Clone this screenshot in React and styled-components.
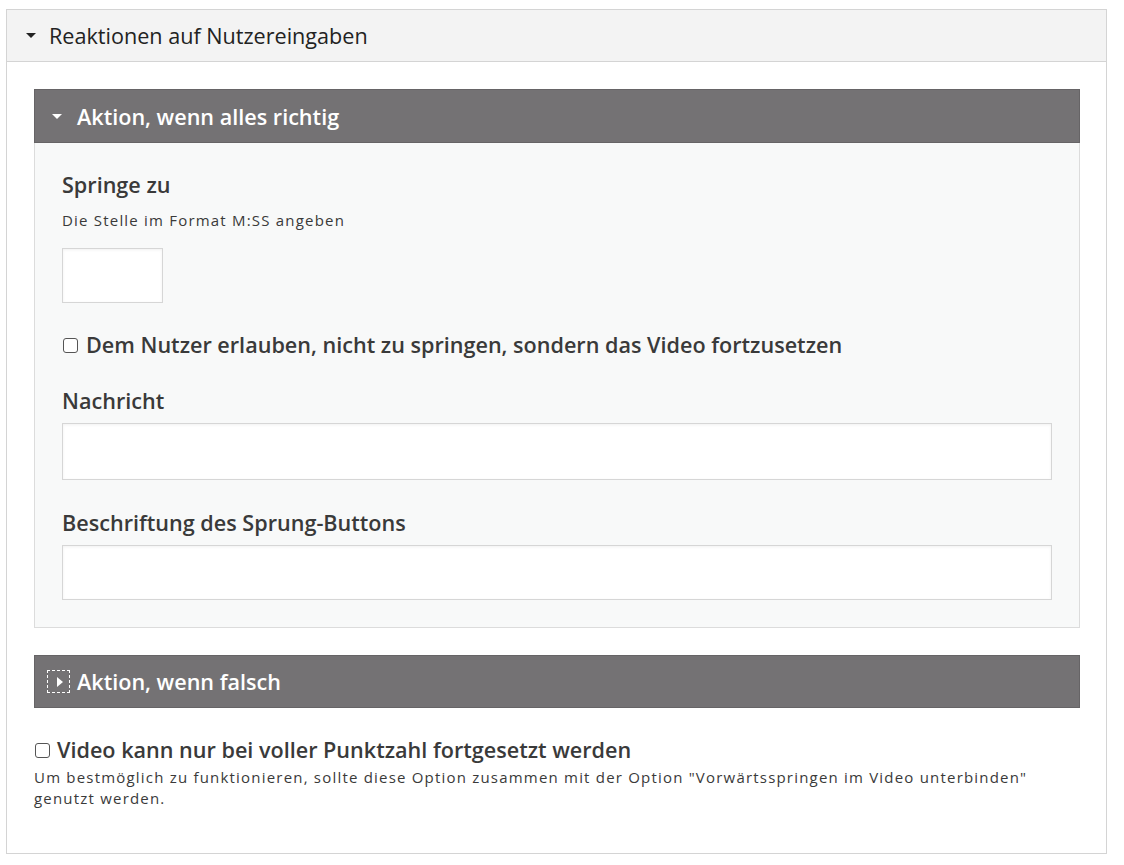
import styled, { createGlobalStyle } from "styled-components";

const GlobalStyle = createGlobalStyle`
  body {
    margin: 0;
    background: #fff;
    font-family: "Open Sans", "Liberation Sans", sans-serif;
    color: #3a3a3a;
  }
`;

const Page = styled.div`
  padding: 9px 17px 11px 6px;
`;

const Group = styled.div`
  border: 1px solid #d4d4d4;
  background: #fff;
`;

const GroupTitle = styled.div`
  display: flex;
  align-items: center;
  height: 51px;
  padding-left: 19px;
  background: #f3f3f3;
  border-bottom: 1px solid #d4d4d4;
  font-size: 21.6px;
  color: #222;
`;

const GroupContent = styled.div`
  padding: 27px 26px 44px 27px;
`;

const Caret = styled.span`
  display: inline-block;
  width: 0;
  height: 0;
  border-left: 5px solid transparent;
  border-right: 5px solid transparent;
  border-top: 5px solid ${({ color }) => color || "#222"};
  margin-right: ${({ gap }) => gap || 13}px;
`;

const SubHeader = styled.div`
  display: flex;
  align-items: center;
  height: ${({ collapsed }) => (collapsed ? "51px" : "52px")};
  padding-left: ${({ collapsed }) => (collapsed ? "12px" : "17px")};
  background: #747274;
  border: 1px solid #666466;
  color: #fff;
  font-size: 21.6px;
  font-weight: 600;
`;

const FocusBox = styled.span`
  display: inline-flex;
  align-items: center;
  justify-content: center;
  width: 23px;
  height: 23px;
  border: 1px dashed #fff;
  margin-right: 7px;
  box-sizing: border-box;
`;

const RightCaret = styled.span`
  width: 0;
  height: 0;
  border-top: 5px solid transparent;
  border-bottom: 5px solid transparent;
  border-left: 6px solid #fff;
  margin-left: 2px;
`;

const SubBody = styled.div`
  background: #f8f9f9;
  border: 1px solid #dcdcdc;
  border-top: none;
  padding: 27px;
  margin-bottom: 27px;
`;

const Label = styled.div`
  font-size: 21.6px;
  font-weight: 600;
  line-height: 30px;
  color: #3a3a3a;
  margin-top: ${({ mt }) => mt || 0}px;
`;

const Description = styled.div`
  font-size: 15px;
  line-height: 21px;
  letter-spacing: 1.2px;
  color: #3a3a3a;
  margin-top: ${({ mt }) => mt || 0}px;
`;

const TextInput = styled.input`
  display: block;
  box-sizing: border-box;
  width: ${({ w }) => w || "100%"};
  height: ${({ h }) => h}px;
  margin-top: ${({ mt }) => mt || 0}px;
  background: #fff;
  border: 1px solid #d6d6d6;
  box-shadow: inset 0 1px 3px rgba(0, 0, 0, 0.06);
  outline: none;
`;

const CheckRow = styled.label`
  display: flex;
  align-items: center;
  font-size: 21.6px;
  font-weight: 600;
  line-height: 30px;
  color: #3a3a3a;
  margin-top: ${({ mt }) => mt || 0}px;
`;

const Box = styled.span`
  width: 15px;
  height: 15px;
  box-sizing: border-box;
  border: 1px solid #555;
  border-radius: 3px;
  background: #fff;
  margin: 0 ${({ gap }) => gap}px 0 1px;
  flex: none;
`;

export default function App() {
  return (
    <>
      <GlobalStyle />
      <Page>
        <Group>
          <GroupTitle>
            <Caret />
            Reaktionen auf Nutzereingaben
          </GroupTitle>
          <GroupContent>
            <SubHeader>
              <Caret color="#fff" gap={15} />
              Aktion, wenn alles richtig
            </SubHeader>
            <SubBody>
              <Label>Springe zu</Label>
              <Description mt={10}>Die Stelle im Format M:SS angeben</Description>
              <TextInput w="101px" h={55} mt={17} />
              <CheckRow mt={27}>
                <Box gap={8} />
                Dem Nutzer erlauben, nicht zu springen, sondern das Video fortzusetzen
              </CheckRow>
              <Label mt={26}>Nachricht</Label>
              <TextInput h={57} mt={7} />
              <Label mt={28}>Beschriftung des Sprung-Buttons</Label>
              <TextInput h={55} mt={7} />
            </SubBody>
            <SubHeader collapsed>
              <FocusBox>
                <RightCaret />
              </FocusBox>
              Aktion, wenn falsch
            </SubHeader>
            <CheckRow mt={27}>
              <Box gap={7} />
              Video kann nur bei voller Punktzahl fortgesetzt werden
            </CheckRow>
            <Description mt={2}>
              Um bestmöglich zu funktionieren, sollte diese Option zusammen mit der Option
              "Vorwärtsspringen im Video unterbinden" genutzt werden.
            </Description>
          </GroupContent>
        </Group>
      </Page>
    </>
  );
}
